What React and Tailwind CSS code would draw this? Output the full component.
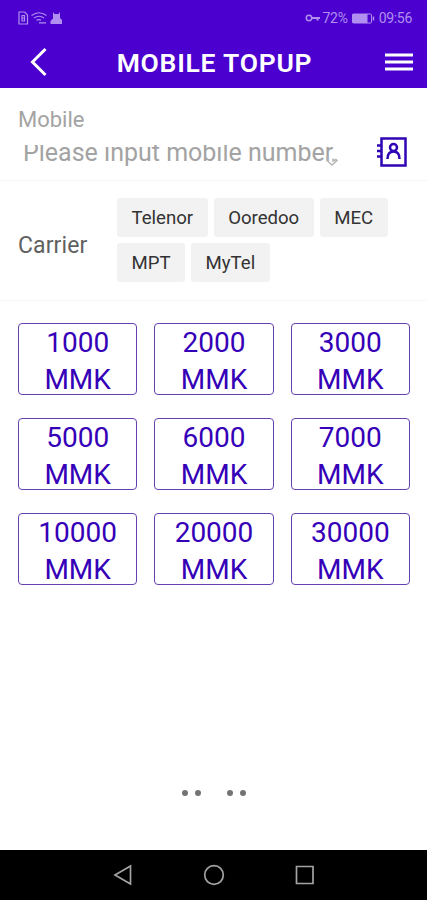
import React from "react";

const carriers = ["Telenor", "Ooredoo", "MEC", "MPT", "MyTel"];
const amounts = [1000, 2000, 3000, 5000, 6000, 7000, 10000, 20000, 30000];

const StatusBar = () => (
  <div className="flex h-9 items-center justify-between pl-[18px] pr-[15px] text-[#b08ff0]">
    <svg width="46" height="14" viewBox="0 0 46 14" fill="none" stroke="currentColor" strokeWidth="1.2">
      <path d="M1 1h5.500l3 3v9H1z" />
      <path d="M4 4.500h2.500v5.500H4zM4 7h2.500" />
      <path d="M13.500 4.500q7.500-5.500 15 0M16 7q5-3.500 10 0M18.500 9.300q2.500-1.500 4.500 0M21 11.800h7" />
      <path d="M35 1l1.500 2h4L42 1v6l2 2v4H32.500V10l2.500-2.500z" fill="currentColor" stroke="none" />
    </svg>
    <div className="flex items-center text-[14px] tracking-[-0.3px]">
      <svg width="16" height="8" viewBox="0 0 16 8" fill="none" stroke="currentColor" strokeWidth="1.500" className="mr-[2px]">
        <circle cx="4" cy="4" r="2.700" />
        <path d="M7 4h8M12.500 4v2.500" strokeWidth="2" />
      </svg>
      <span>72%</span>
      <svg width="23" height="11" viewBox="0 0 23 11" className="ml-1" fill="none" stroke="currentColor">
        <rect x="0.500" y="1" width="19" height="9" rx="1" />
        <rect x="1" y="1.500" width="14" height="8" fill="currentColor" />
        <path d="M21.500 3.500v4" strokeWidth="1.500" />
      </svg>
      <span className="ml-1">09:56</span>
    </div>
  </div>
);

const Header = () => (
  <header className="h-[88px] shrink-0 bg-[#4b00cf]">
    <StatusBar />
    <div className="flex h-[52px] items-center justify-between pl-[30px] pr-[14px] text-white">
      <svg width="18" height="30" viewBox="0 0 18 30" fill="none" stroke="currentColor" strokeWidth="3">
        <path d="M15.500 2L2.500 15l13 13" />
      </svg>
      <h1 className="-ml-[4px] pt-[3px] text-[26.5px] font-semibold leading-none tracking-[0.75px]">MOBILE TOPUP</h1>
      <svg width="28" height="20" viewBox="0 0 28 20" fill="none" stroke="currentColor" strokeWidth="3">
        <path d="M0 3h28M0 10h28M0 17h28" />
      </svg>
    </div>
  </header>
);

const MobileField = () => (
  <section className="flex h-[93px] items-start justify-between border-b border-[#f4f4f4] pl-[18px] pr-[19px] pt-[18px]">
    <div className="text-[#a3a3a3]">
      <div className="h-[39px] text-[22px] leading-[27px]">Mobile</div>
      {/* the placeholder is cut off by the top edge of the input */}
      <div className="relative flex h-[23px] w-[325px] items-end overflow-hidden pl-[5px]">
        <span className="-translate-y-px whitespace-nowrap text-[25px] leading-[29px]">Please input mobile number</span>
        <svg width="13" height="11" viewBox="0 0 13 11" fill="none" stroke="#b5b5b5" strokeWidth="1.500" className="absolute left-[308px] top-[11px]">
          <path d="M1 1v3.500l5 4.500 5-4.500-1-1-3 1.500V2.500" />
        </svg>
      </div>
    </div>
    <svg width="32" height="32" viewBox="0 0 32 32" fill="none" stroke="#2f05b5" strokeWidth="2.500" className="mt-[30px] shrink-0">
      <path d="M5.500 2.500h24v27h-24zM1 9.500h5M1 15h5M1 20.500h5" />
      <circle cx="17.500" cy="11.500" r="3.500" />
      <path d="M11.500 23q0-7.500 6-7.500t6 7.500" />
    </svg>
  </section>
);

const CarrierPicker = () => (
  <section className="flex h-[120px] items-center border-b border-[#f6f6f6] pl-[18px]">
    <div className="w-[99px] pt-[11px] text-[23px] tracking-[0.1px] text-[#606060]">Carrier</div>
    <div className="-mt-px flex w-[290px] flex-wrap gap-[6px]">
      {carriers.map((name) => (
        <button key={name} className="h-[39px] rounded-[3px] bg-[#f2f2f2] px-[14.5px] pt-[3px] text-[18.6px] text-[#333]">
          {name}
        </button>
      ))}
    </div>
  </section>
);

const AmountGrid = () => (
  <section className="grid grid-cols-3 gap-x-[17px] gap-y-[23px] pl-[18px] pr-[17px] pt-[22px]">
    {amounts.map((amount) => (
      <button
        key={amount}
        className="h-[72px] rounded-[4px] border border-[#6540b0] text-[28px] leading-[37px] text-[#3500b8]"
      >
        {amount}
        <br />
        MMK
      </button>
    ))}
  </section>
);

const NavBar = () => (
  <nav className="h-[50px] shrink-0 bg-black text-[#a3a3a3]">
    <svg width="427" height="50" viewBox="0 0 427 50" fill="none" stroke="currentColor" strokeWidth="1.700">
      <path d="M115 25l15.500-9v18z" />
      <circle cx="214" cy="25" r="9.300" />
      <path d="M296.500 16.500h16.500v17h-16.500z" />
    </svg>
  </nav>
);

export default function App() {
  return (
    <div className="flex h-[900px] w-[427px] flex-col overflow-hidden bg-white font-['Roboto',sans-serif]">
      <Header />
      <MobileField />
      <CarrierPicker />
      <AmountGrid />
      <div className="mt-auto mb-[54px] flex justify-center gap-[26px]">
        {[0, 1].map((pair) => (
          <div key={pair} className="flex gap-[7px]">
            <span className="size-[6px] rounded-full bg-[#737373]" />
            <span className="size-[6px] rounded-full bg-[#737373]" />
          </div>
        ))}
      </div>
      <NavBar />
    </div>
  );
}
